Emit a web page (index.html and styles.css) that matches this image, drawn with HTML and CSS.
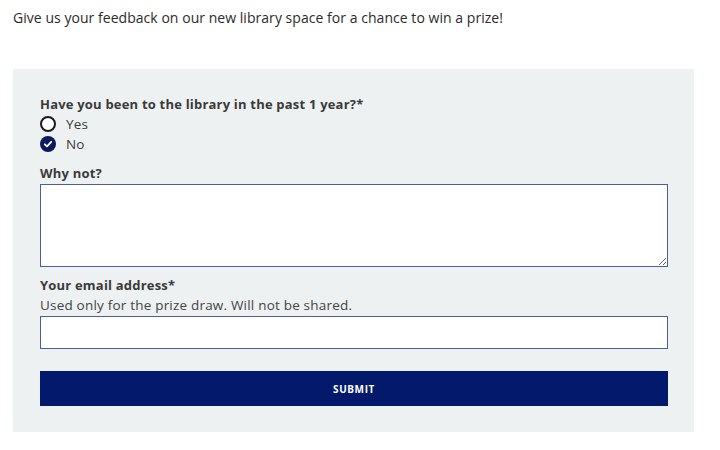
FILE: index.html
```html
<!DOCTYPE html>
<html>
<head>
<meta charset="utf-8">
<link rel="stylesheet" href="styles.css">
</head>
<body>
<p class="intro">Give us your feedback on our new library space for a chance to win a prize!</p>
<form class="panel">
  <fieldset class="group">
    <legend class="label">Have you been to the library in the past 1 year?*</legend>
    <label class="option">
      <span class="radio"></span>
      <span>Yes</span>
    </label>
    <label class="option">
      <span class="radio checked">
        <svg viewBox="0 0 16 16" width="16" height="16"><circle cx="8" cy="8" r="8" fill="#0b1a5c"/><path d="M4.8 8.3 L7 10.4 L11.2 5.8" fill="none" stroke="#fff" stroke-width="1.8" stroke-linecap="round" stroke-linejoin="round"/></svg>
      </span>
      <span>No</span>
    </label>
  </fieldset>
  <div class="field">
    <label class="label">Why not?</label>
    <textarea class="textarea"></textarea>
  </div>
  <div class="field">
    <label class="label">Your email address*</label>
    <span class="help">Used only for the prize draw. Will not be shared.</span>
    <input class="input" type="text">
  </div>
  <button class="submit" type="button">SUBMIT</button>
</form>
</body>
</html>
```
FILE: styles.css
```css
* { box-sizing: border-box; }
body {
  margin: 0;
  padding: 0 26px 0 13px;
  font-family: "Open Sans", "Liberation Sans", sans-serif;
  color: #2b2b2b;
  background: #fff;
}
.intro {
  margin: 0;
  padding-top: 8px;
  height: 69px;
  font-size: 14px;
  letter-spacing: 0.04px;
}
.panel {
  background: #eef1f2;
  padding: 26px 26px 26px 27px;
  display: flex;
  flex-direction: column;
}
.group {
  border: 0;
  margin: 0;
  padding: 0;
  display: flex;
  flex-direction: column;
  gap: 4px;
}
.label {
  padding: 0;
  font-size: 13px;
  font-weight: 700;
  color: #3a3a3a;
  letter-spacing: 0.2px;
  line-height: 18px;
  margin-bottom: 2px;
}
.option {
  display: flex;
  align-items: center;
  gap: 10px;
  font-size: 13.5px;
  color: #3a3a3a;
  height: 16px;
  letter-spacing: 0.2px;
  transform: translateY(1px);
}
.radio {
  width: 16px;
  height: 16px;
  border: 2px solid #1a1a1a;
  border-radius: 50%;
  background: #fff;
  display: block;
}
.radio.checked {
  border: 0;
  background: none;
}
.radio svg { display: block; }
.field {
  display: flex;
  flex-direction: column;
  margin-top: 13px;
}
.field + .field { margin-top: 9px; }
.textarea {
  height: 83px;
  border: 1px solid #4f5d9e;
  background: #fff;
  resize: vertical;
  margin: 0;
  display: block;
}
.help {
  font-size: 13.5px;
  color: #444;
  line-height: 18px;
  letter-spacing: 0.2px;
  margin-bottom: 2px;
}
.input {
  height: 33px;
  border: 1px solid #4f5d9e;
  background: #fff;
  margin: 0;
}
.submit {
  margin-top: 22px;
  height: 35px;
  background: #03196b;
  color: #fff;
  border: 0;
  font-family: "Open Sans", "Liberation Sans", sans-serif;
  font-weight: 700;
  font-size: 10px;
  letter-spacing: 0.6px;
}
```
